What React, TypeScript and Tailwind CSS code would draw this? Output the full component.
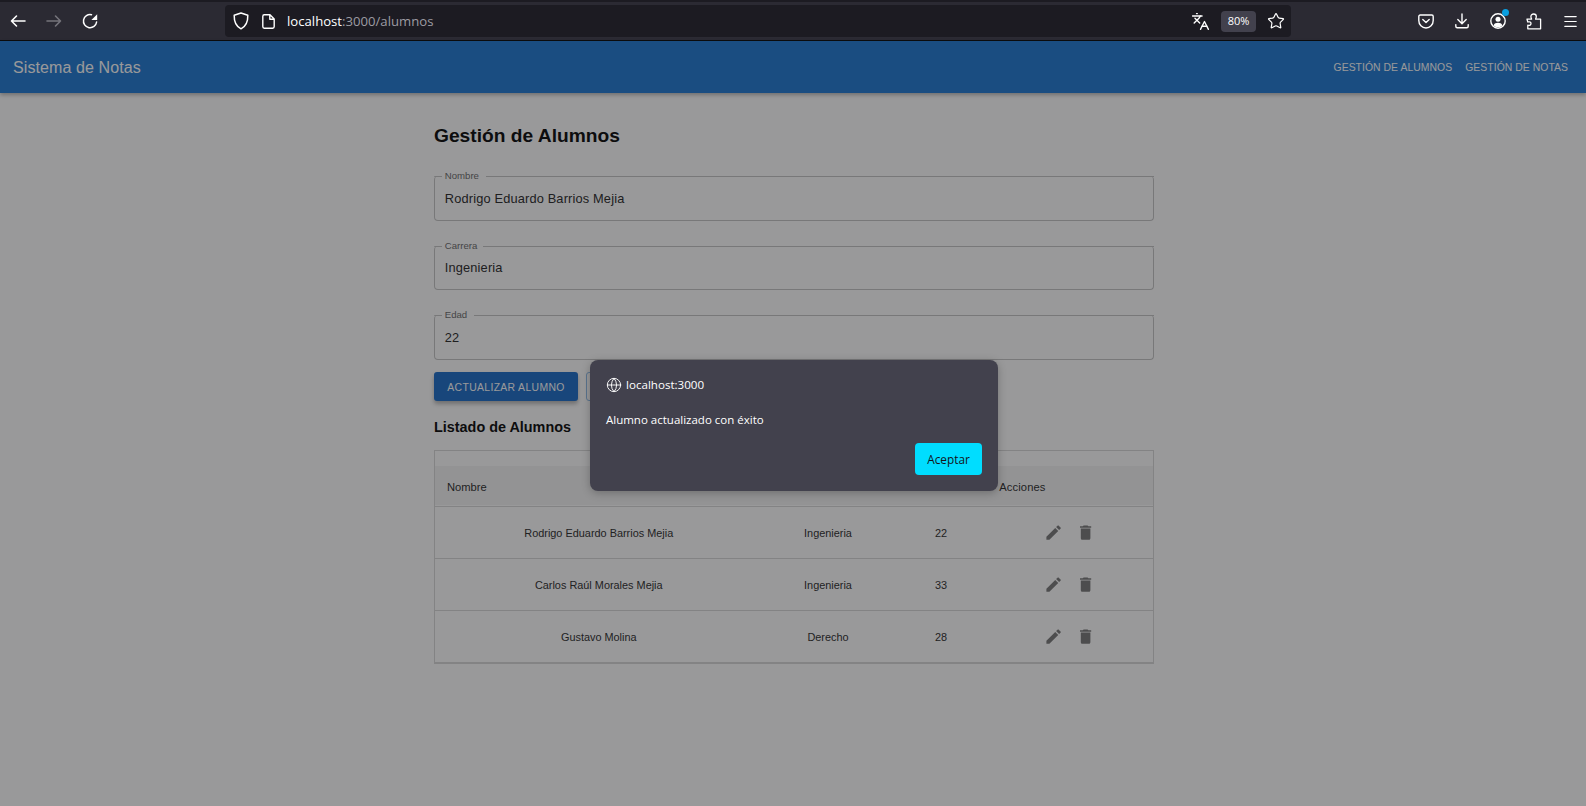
import { Globe, Languages, Menu, Star } from "lucide-react";

const alumnos = [
  { nombre: "Rodrigo Eduardo Barrios Mejia", carrera: "Ingenieria", edad: 22 },
  { nombre: "Carlos Raúl Morales Mejia", carrera: "Ingenieria", edad: 33 },
  { nombre: "Gustavo Molina", carrera: "Derecho", edad: 28 },
];

const campos = [
  { label: "Nombre", value: "Rodrigo Eduardo Barrios Mejia", gap: "w-[44px]" },
  { label: "Carrera", value: "Ingenieria", gap: "w-[41px]" },
  { label: "Edad", value: "22", gap: "w-[32px]" },
];

function BackIcon() {
  return (
    <svg width="16" height="16" viewBox="0 0 16 16" fill="none" stroke="currentColor" strokeWidth="1.6" strokeLinecap="round" strokeLinejoin="round">
      <path d="M1.5 8 H15 M6.5 3 L1.5 8 L6.5 13" />
    </svg>
  );
}

function ForwardIcon() {
  return (
    <svg width="16" height="16" viewBox="0 0 16 16" fill="none" stroke="currentColor" strokeWidth="1.6" strokeLinecap="round" strokeLinejoin="round">
      <path d="M1 8 H14.5 M9.5 3 L14.5 8 L9.5 13" />
    </svg>
  );
}

function ReloadIcon() {
  return (
    <svg width="16" height="16" viewBox="0 0 16 16" fill="none" stroke="white" strokeWidth="1.5" strokeLinecap="round">
      <path d="M9.5 1.7 A6.6 6.6 0 1 0 14.6 9" />
      <path d="M15.2 1.2 V7 H9.4 Z" fill="white" stroke="none" />
    </svg>
  );
}

function ShieldIcon() {
  return (
    <svg width="16" height="18" viewBox="0 0 16 18" fill="none" stroke="white" strokeWidth="1.5">
      <path d="M8 1 L14.8 3.2 C15 9.5 13.5 14 8 16.8 C2.5 14 1 9.5 1.2 3.2 Z" strokeLinejoin="round" />
    </svg>
  );
}

function PageIcon() {
  return (
    <svg width="13" height="15" viewBox="0 0 13 15" fill="none" stroke="white" strokeWidth="1.4">
      <path d="M2.2 .8 H8 L12.2 5 V12.6 C12.2 13.5 11.6 14.2 10.7 14.2 H2.2 C1.3 14.2 .8 13.5 .8 12.6 V2.4 C.8 1.5 1.3 .8 2.2 .8 Z M7.8 1 V5.2 H12" strokeLinejoin="round" />
    </svg>
  );
}

function PocketIcon() {
  return (
    <svg width="16" height="15" viewBox="0 0 16 15" fill="none" stroke="white" strokeWidth="1.4">
      <path d="M2.2 1 H13.8 C14.6 1 15.2 1.6 15.2 2.4 V6.5 C15.2 10.8 12 14 8 14 C4 14 .8 10.8 .8 6.5 V2.4 C.8 1.6 1.4 1 2.2 1 Z" />
      <path d="M4.8 5.6 L8 8.6 L11.2 5.6" strokeLinecap="round" strokeLinejoin="round" />
    </svg>
  );
}

function DownloadIcon() {
  return (
    <svg width="16" height="16" viewBox="0 0 16 16" fill="none" stroke="white" strokeWidth="1.4" strokeLinecap="round" strokeLinejoin="round">
      <path d="M8 1 V10.5 M3.8 6.6 L8 10.8 L12.2 6.6" />
      <path d="M1.8 11.6 V13.2 C1.8 14.1 2.4 14.7 3.2 14.7 H12.8 C13.6 14.7 14.2 14.1 14.2 13.2 V11.6" />
    </svg>
  );
}

function AccountIcon() {
  return (
    <div className="relative">
      <svg width="16" height="16" viewBox="0 0 16 16" fill="none" stroke="white" strokeWidth="1.4">
        <circle cx="8" cy="8" r="7.2" />
        <circle cx="8" cy="6.2" r="2.5" fill="white" stroke="none" />
        <path d="M3.6 12.4 C4.4 10.4 6 9.8 8 9.8 C10 9.8 11.6 10.4 12.4 12.4 C11 13.7 9.6 14.2 8 14.2 C6.4 14.2 5 13.7 3.6 12.4 Z" fill="white" stroke="none" />
      </svg>
      <span className="absolute right-[-3px] top-[-4px] h-[7px] w-[7px] rounded-full bg-[#0a9fe0]" />
    </div>
  );
}

function PuzzleIcon() {
  return (
    <svg width="16" height="17" viewBox="0 0 16 17" fill="none" stroke="white" strokeWidth="1.3">
      <path d="M1 6.2 H5.6 C5.6 5.4 4.9 5 4.9 3.6 C4.9 2 6 1 7.6 1 C9.2 1 10.3 2 10.3 3.6 C10.3 5 9.6 5.4 9.6 6.2 H14.6 V15.8 H1.8 V12.2 C3.8 12.8 5 12 5 10.6 C5 9.2 3.8 8.4 1.8 9 Z" strokeLinejoin="round" />
    </svg>
  );
}

function BrowserBar() {
  return (
    <div className="flex h-[41px] shrink-0 items-center border-t-2 border-b border-t-[#1c1b22] border-b-[#0c0c0d] bg-[#2b2a33] pr-[7px] text-white">
      <div className="flex w-[225px] shrink-0 items-center pl-[10px]">
        <BackIcon />
        <span className="ml-[20px] flex text-[#75747b]"><ForwardIcon /></span>
        <span className="ml-[20px] flex"><ReloadIcon /></span>
      </div>
      <div className="flex h-[32px] w-[1066px] items-center rounded-[4px] bg-[#1c1b22] pl-[8px] pr-[6px]">
        <ShieldIcon />
        <span className="ml-[13px] flex"><PageIcon /></span>
        <span className="ml-[12px] pt-[1px] font-['Open_Sans',sans-serif] text-[13.15px] text-white">
          localhost<span className="text-[#9d9ca2]">:3000/alumnos</span>
        </span>
        <div className="ml-auto flex items-center">
          <Languages size={19} strokeWidth={1.7} />
          <span className="ml-[11px] flex h-[21px] w-[35px] items-center justify-center rounded-[4px] bg-[#42414d] font-['Open_Sans',sans-serif] text-[11px]">
            80%
          </span>
          <Star size={18} strokeWidth={1.6} className="ml-[11px]" />
        </div>
      </div>
      <div className="ml-auto flex items-center gap-[20px]">
        <PocketIcon />
        <DownloadIcon />
        <AccountIcon />
        <PuzzleIcon />
        <Menu size={17} strokeWidth={1.7} />
      </div>
    </div>
  );
}

export default function App() {
  return (
    <div className="flex h-[806px] w-[1586px] flex-col overflow-hidden bg-white font-['Liberation_Sans',sans-serif]">
      <BrowserBar />
      <div className="relative flex-1">
        <header className="flex h-[52px] items-center justify-between bg-[#1976d2] px-[13px] pt-[1px] text-white shadow-[0_2px_4px_rgba(0,0,0,0.3)]">
          <span className="text-[16px] tracking-[0.1px]">Sistema de Notas</span>
          <nav className="flex gap-[13px] pr-[5px] text-[10.4px] tracking-[0.05px] uppercase">
            <span>Gestión de Alumnos</span>
            <span>Gestión de Notas</span>
          </nav>
        </header>

        <main className="ml-[434px] w-[720px] pt-[32px]">
          <h1 className="text-[19.2px] font-bold leading-[22px] text-black">Gestión de Alumnos</h1>

          <div className="mt-[29px] flex flex-col gap-[24.8px]">
            {campos.map((c) => (
              <div key={c.label} className="relative flex h-[44.8px] items-center rounded-[4px] border-x border-b border-[#c4c4c4] px-[9.8px] pt-[1px] text-[12.8px] tracking-[0.16px] text-[#212121]">
                <div className="absolute left-[-1px] right-[-1px] top-0 flex h-[1px]">
                  <span className="w-[8px] rounded-tl-[4px] bg-[#c4c4c4]" />
                  <span className={`${c.gap} shrink-0`} />
                  <span className="flex-1 bg-[#c4c4c4]" />
                </div>
                <span className="absolute left-[9.8px] top-[-6px] text-[9.6px] leading-[12px] tracking-normal text-[#666666]">{c.label}</span>
                {c.value}
              </div>
            ))}
          </div>

          <div className="mt-[12px] flex gap-[8px]">
            <button className="h-[29px] w-[144px] rounded-[3px] bg-[#1569c7] pt-[2px] text-[10.4px] tracking-[0.35px] text-white uppercase shadow-[0_3px_4px_rgba(0,0,0,0.3)]">
              Actualizar Alumno
            </button>
            <button className="h-[29px] w-[100px] rounded-[3px] border border-[#8cbbe9]" />
          </div>

          <h2 className="mt-[17px] text-[14.4px] font-bold leading-[18px] text-black">Listado de Alumnos</h2>

          <table className="mt-[14px] w-full table-fixed border-collapse border border-b-2 border-[#d8d8d8] text-[10.9px] text-[#262626]">
            <colgroup>
              <col className="w-[328px]" />
              <col className="w-[131px]" />
              <col className="w-[95px]" />
              <col />
            </colgroup>
            <thead>
              <tr className="h-[56px] border-b border-[#d8d8d8] bg-[linear-gradient(#ffffff_16px,#f5f5f5_16px)] text-left text-[11.2px]">
                <th className="px-[12px] pt-[17px] font-normal">Nombre</th>
                <th className="px-[12px] pt-[17px] font-normal">Carrera</th>
                <th className="px-[12px] pt-[17px] font-normal">Edad</th>
                <th className="pl-[10.8px] pt-[17px] font-normal tracking-[0.1px]">Acciones</th>
              </tr>
            </thead>
            <tbody>
              {alumnos.map((a) => (
                <tr key={a.nombre} className="h-[52px] border-b border-[#d8d8d8] text-center last:h-[53px]">
                  <td className="pt-[1px]">{a.nombre}</td>
                  <td className="pt-[1px]">{a.carrera}</td>
                  <td className="pt-[1px]">{a.edad}</td>
                  <td className="pr-[2px]">
                    <div className="flex justify-center gap-[13px] text-[#757575]">
                      <svg width="19.2" height="19.2" viewBox="0 0 24 24" fill="currentColor">
                        <path d="M3 17.25V21h3.75L17.81 9.94l-3.75-3.75L3 17.25zM20.71 7.04c.39-.39.39-1.02 0-1.41l-2.34-2.34a.9959.9959 0 0 0-1.41 0l-1.83 1.83 3.75 3.75 1.83-1.83z" />
                      </svg>
                      <svg width="19.2" height="19.2" viewBox="0 0 24 24" fill="currentColor">
                        <path d="M6 19c0 1.1.9 2 2 2h8c1.1 0 2-.9 2-2V7H6v12zM19 4h-3.5l-1-1h-5l-1 1H5v2h14V4z" />
                      </svg>
                    </div>
                  </td>
                </tr>
              ))}
            </tbody>
          </table>
        </main>

        {/* Firefox tab-modal backdrop */}
        <div className="absolute inset-0 bg-[#1c1c1f]/45" />

        <div className="absolute left-[590px] top-[319px] h-[131px] w-[408px] rounded-[8px] bg-[#42414d] px-[16px] pt-[16px] font-['Open_Sans',sans-serif] text-white shadow-[0_2px_8px_rgba(0,0,0,0.25)]">
          <div className="flex items-center gap-[4px] text-[11.6px] font-medium">
            <Globe size={16} strokeWidth={1.4} />
            localhost:3000
          </div>
          <p className="mt-[18px] text-[11.5px]">Alumno actualizado con éxito</p>
          <div className="absolute bottom-[16px] right-[16px] flex h-[32px] w-[67px] items-center justify-center rounded-[4px] bg-[#00ddff] pt-[1px] text-[11.8px] text-[#15141a]">
            Aceptar
          </div>
        </div>
      </div>
    </div>
  );
}
